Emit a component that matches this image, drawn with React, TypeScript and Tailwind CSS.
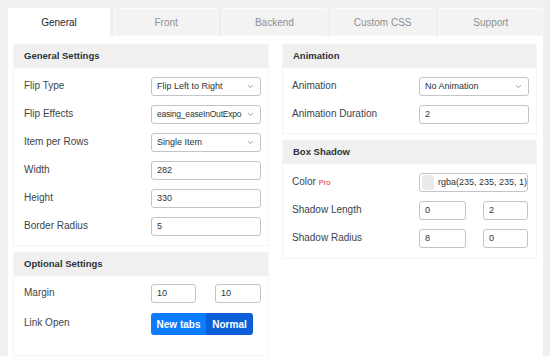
import * as React from 'react'
import { ChevronDown } from 'lucide-react'

const TABS = ['General', 'Front', 'Backend', 'Custom CSS', 'Support']

const Header: React.FC<{ title: string }> = ({ title }) => (
  <div className="h-[24px] flex items-center bg-[#f0f0f0] px-[10px] text-[9.5px] font-semibold text-[#2c3338]">
    {title}
  </div>
)

const Select: React.FC<{ value: string; tight?: boolean }> = ({ value, tight }) => (
  <div className="w-[110px] h-[19px] flex items-center justify-between border border-[#c3c4c7] rounded-[3px] bg-white pl-[5px] pr-[5px] text-[9px] text-[#2c3338] whitespace-nowrap">
    <span className={tight ? 'text-[8.5px] tracking-[-0.2px]' : ''}>{value}</span>
    <ChevronDown className="w-[9px] h-[9px] text-[#50575e] flex-shrink-0 ml-[2px]" strokeWidth={1.5} />
  </div>
)

const Input: React.FC<{ value: string; w?: string }> = ({ value, w = 'w-[110px]' }) => (
  <div className={`${w} h-[19px] flex items-center border border-[#c3c4c7] rounded-[3px] bg-white px-[5px] text-[9px] text-[#2c3338]`}>
    {value}
  </div>
)

const Row: React.FC<{ label: React.ReactNode; children: React.ReactNode }> = ({ label, children }) => (
  <div className="flex items-center h-[19px]">
    <div className="w-[127px] text-[10px] text-[#3c434a] -mt-[2px]">{label}</div>
    {children}
  </div>
)

export default function App() {
  return (
    <div
      className="w-[550px] h-[356px] overflow-hidden bg-[#f0f0f1] pt-[8px] pl-[8px] pr-[7px]"
      style={{ fontFamily: '"Liberation Sans", Arial, sans-serif' }}
    >
      {/* Tabs */}
      <div className="flex h-[28px] gap-[4px]">
        {TABS.map((t, i) => (
          <div
            key={t}
            className={
              i === 0
                ? 'w-[102px] flex items-center justify-center bg-white text-[10px] text-[#1d2327]'
                : 'flex-1 flex items-center justify-center bg-[#f3f3f3] border border-[#fafafa] text-[10px] text-[#8c8f94]'
            }
          >
            {t}
          </div>
        ))}
      </div>

      {/* Panel */}
      <div className="bg-white h-[320px] flex gap-[13px] pl-[5px] pr-[6px] pt-[8px]">
        {/* Left column */}
        <div className="w-[256px] flex flex-col gap-[6px]">
          <div className="border border-[#f5f5f5] border-t-0">
            <Header title="General Settings" />
            <div className="flex flex-col gap-[9px] pl-[10px] pt-[9px] pb-[9px]">
              <Row label="Flip Type"><Select value="Flip Left to Right" /></Row>
              <Row label="Flip Effects"><Select value="easing_easeInOutExpo" tight /></Row>
              <Row label="Item per Rows"><Select value="Single Item" /></Row>
              <Row label="Width"><Input value="282" /></Row>
              <Row label="Height"><Input value="330" /></Row>
              <Row label="Border Radius"><Input value="5" /></Row>
            </div>
          </div>
          <div className="flex-1 border border-[#f5f5f5] border-t-0">
            <Header title="Optional Settings" />
            <div className="flex flex-col gap-[10px] pl-[10px] pt-[8px]">
              <Row label="Margin">
                <div className="flex gap-[19px]">
                  <Input value="10" w="w-[45px]" />
                  <Input value="10" w="w-[46px]" />
                </div>
              </Row>
              <div className="flex items-center h-[22px]">
                <div className="w-[127px] text-[10px] text-[#3c434a] -mt-[4px]">Link Open</div>
                <div className="flex h-[22px] rounded-[3px] overflow-hidden text-[10px] font-semibold text-white">
                  <div className="w-[55px] flex items-center justify-center bg-[#0a7cff]">New tabs</div>
                  <div className="w-[47px] flex items-center justify-center bg-[#0a5fd6]">Normal</div>
                </div>
              </div>
            </div>
          </div>
        </div>

        {/* Right column */}
        <div className="w-[255px] flex flex-col gap-[6px]">
          <div className="border border-[#f5f5f5] border-t-0">
            <Header title="Animation" />
            <div className="flex flex-col gap-[9px] pl-[9px] pt-[9px] pb-[9px]">
              <Row label="Animation"><Select value="No Animation" /></Row>
              <Row label="Animation Duration"><Input value="2" /></Row>
            </div>
          </div>
          <div className="border border-[#f5f5f5] border-t-0">
            <Header title="Box Shadow" />
            <div className="flex flex-col gap-[9px] pl-[9px] pt-[9px] pb-[10px]">
              <Row
                label={
                  <span>
                    Color <span className="text-[7.5px] text-[#e2264d]">Pro</span>
                  </span>
                }
              >
                <div className="w-[109px] h-[19px] flex items-center border border-[#c3c4c7] rounded-[3px] bg-white pl-[2px] gap-[4px] text-[9px] text-[#2c3338] whitespace-nowrap overflow-hidden">
                  <span className="w-[12px] h-[15px] bg-[#ebebeb] rounded-[2px] flex-shrink-0" />
                  rgba(235, 235, 235, 1)
                </div>
              </Row>
              <Row label="Shadow Length">
                <div className="flex gap-[17px]">
                  <Input value="0" w="w-[47px]" />
                  <Input value="2" w="w-[45px]" />
                </div>
              </Row>
              <Row label="Shadow Radius">
                <div className="flex gap-[17px]">
                  <Input value="8" w="w-[47px]" />
                  <Input value="0" w="w-[45px]" />
                </div>
              </Row>
            </div>
          </div>
        </div>
      </div>
    </div>
  )
}
